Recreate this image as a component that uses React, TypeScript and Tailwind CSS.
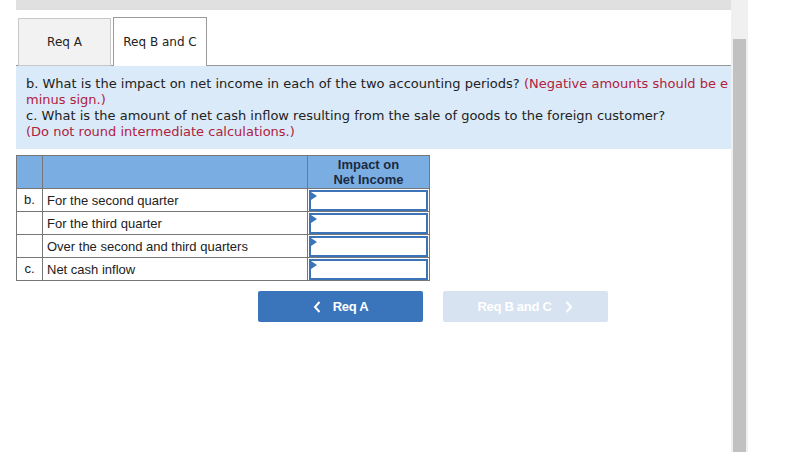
import React from 'react';

const rows = [
    { label: 'b.', text: 'For the second quarter' },
    { label: '', text: 'For the third quarter' },
    { label: '', text: 'Over the second and third quarters' },
    { label: 'c.', text: 'Net cash inflow' },
];

function AnswerInput() {
    return (
        <div className="relative h-[21px] border-2 border-[#3b74b9] bg-white">
            <svg className="absolute left-0 top-0" width="6" height="8" viewBox="0 0 6 8">
                <path d="M0 0 L6 4 L0 8 Z" fill="#3b74b9" />
            </svg>
        </div>
    );
}

export default function App() {
    return (
        <div className="flex h-[452px] w-[790px] overflow-hidden bg-white">
            <div className="ml-4 w-[715px] overflow-hidden">
                <div className="h-[10px] bg-[#e0e0e0]" />

                {/* Tabs */}
                <div className="mt-[7px] flex items-end gap-[2px] border-b border-[#999] pl-[2px] font-['DejaVu_Sans',sans-serif] text-[12px]">
                    <div className="-mb-px flex h-[48px] w-[93px] items-center justify-center border border-[#c8c8c8] bg-[#f2f2f2] text-[#222]">
                        Req A
                    </div>
                    <div className="-mb-px flex h-[49px] w-[94px] items-center justify-center border border-b-0 border-[#999] bg-white text-[#222]">
                        Req B and C
                    </div>
                </div>

                {/* Question panel */}
                <div className="h-[83px] overflow-hidden whitespace-nowrap bg-[#daeaf8] px-[10px] pt-[10px] font-['DejaVu_Sans',sans-serif] text-[13px] leading-[16px] text-[#222]">
                    <div>
                        b. What is the impact on net income in each of the two accounting periods?{' '}
                        <span className="text-[#b0213f]">(Negative amounts should be e</span>
                    </div>
                    <div className="text-[#b0213f]">minus sign.)</div>
                    <div>c. What is the amount of net cash inflow resulting from the sale of goods to the foreign customer?</div>
                    <div className="text-[#b0213f]">(Do not round intermediate calculations.)</div>
                </div>

                {/* Table */}
                <table className="mt-[6px] w-[414px] border-collapse font-['Liberation_Sans',Arial,sans-serif] text-[13px] text-[#222]">
                    <thead>
                        <tr className="h-[33px] bg-[#7aaee3]">
                            <th className="w-[26px] border border-[#777]" />
                            <th className="w-[265px] border border-[#777]" />
                            <th className="border border-[#777] text-center text-[13px] font-bold leading-[15px] text-[#1b2a40]">
                                Impact on
                                <br />
                                Net Income
                            </th>
                        </tr>
                    </thead>
                    <tbody>
                        {rows.map((r, i) => (
                            <tr key={i} className="h-[23px]">
                                <td className="border border-[#777] text-center">{r.label}</td>
                                <td className="border border-[#777] px-[4px] leading-[15px]">{r.text}</td>
                                <td className="border border-[#777] p-0 px-px pt-px">
                                    <AnswerInput />
                                </td>
                            </tr>
                        ))}
                    </tbody>
                </table>

                {/* Navigation */}
                <div className="mt-[10px] flex gap-[20px] pl-[242px] font-['Liberation_Sans',Arial,sans-serif] text-[13px] font-bold">
                    <div className="flex h-[31px] w-[165px] items-center justify-center gap-[12px] rounded-[2px] bg-[#3a75bb] text-white">
                        <svg width="8" height="12" viewBox="0 0 8 12">
                            <path d="M6.5 1 L2 6 L6.5 11" stroke="white" strokeWidth="2" fill="none" />
                        </svg>
                        <span className="tracking-[-0.3px]">Req A</span>
                    </div>
                    <div className="flex h-[31px] w-[165px] items-center justify-center gap-[14px] rounded-[2px] bg-[#d7e3f1] text-white">
                        <span className="tracking-[-0.3px]">Req B and C</span>
                        <svg width="8" height="12" viewBox="0 0 8 12">
                            <path d="M1.5 1 L6 6 L1.5 11" stroke="white" strokeWidth="2" fill="none" />
                        </svg>
                    </div>
                </div>
            </div>

            {/* Scrollbar */}
            <div className="flex w-[17px] flex-col bg-[#f0f0f0] px-[2px] pt-[39px]">
                <div className="flex-1 bg-[#c1c1c1]" />
            </div>
        </div>
    );
}
